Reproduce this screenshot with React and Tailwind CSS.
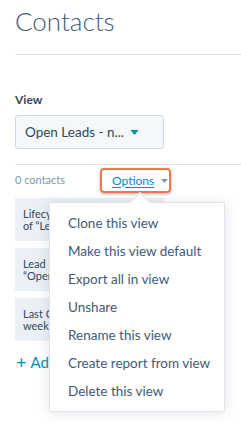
import { useState } from "react";

const MENU_ITEMS = [
  "Clone this view",
  "Make this view default",
  "Export all in view",
  "Unshare",
  "Rename this view",
  "Create report from view",
  "Delete this view",
];

const FILTERS = [
  ["Lifecycle stage is any", "of \u201cLead\u201d"],
  ["Lead status is any of", "\u201cOpen\u201d"],
  ["Last Contacted is more than 1", "week ago"],
];

const Caret = ({ className }) => (
  <svg viewBox="0 0 10 6" className={className} aria-hidden="true">
    <path d="M0 0 L10 0 L5 6 Z" fill="currentColor" />
  </svg>
);

const App = () => {
  const [menuOpen] = useState(true);

  return (
    <div className="relative w-[241px] h-[425px] overflow-hidden bg-white font-['Lato',sans-serif] text-[#33475b]">
      <div className="pl-[15px]">
        <h1 className="pt-[5px] text-[26px] leading-[33px] font-light text-[#425b76]">
          Contacts
        </h1>
        <div className="mt-[16px] h-px bg-[#dfe3eb]" />

        <div className="mt-[38px] text-[12px] leading-[14px] font-bold">View</div>
        <button
          type="button"
          className="mt-[8px] flex items-center w-[149px] h-[34px] px-[9px] rounded-[3px] border border-[#cbd6e2] bg-[#f5f8fa] text-[13.5px]"
        >
          <span>Open Leads - n...</span>
          <Caret className="ml-[6px] w-[9px] h-[5px] text-[#0091ae]" />
        </button>

        <div className="mt-[15px] h-px bg-[#dfe3eb]" />

        <div className="mt-[2px] flex items-center h-[27px]">
          <span className="w-[85px] text-[11px] text-[#7c98b6]">0 contacts</span>
          <div className="flex items-center h-[25px] w-[71px] pl-[10px] rounded-[4px] border-2 border-[#f2754e] shadow-[0_1px_3px_rgba(0,0,0,0.3)]">
            <span className="text-[12px] text-[#0091ae] underline underline-offset-2">
              Options
            </span>
            <Caret className="ml-[7px] w-[7px] h-[4px] text-[#7c98b6]" />
          </div>
        </div>

        <div className="mt-[4px] flex flex-col gap-[7px]">
          {FILTERS.map(([a, b]) => (
            <div
              key={a}
              className="w-[149px] h-[43px] pt-[10px] pl-[8px] bg-[#eaf0f6] text-[11px] leading-[12px] whitespace-nowrap overflow-hidden"
            >
              {a}
              <br />
              {b}
            </div>
          ))}
        </div>

        <div className="mt-[10px] flex items-center text-[15px] text-[#0091ae]">
          <span className="text-[18px] leading-[18px] mr-[4px] ml-[1px]">+</span>
          <span>Add filter</span>
        </div>
      </div>

      {menuOpen && (
        <div className="absolute left-[49px] top-[202px] w-[176px] py-[6px] bg-white border border-[#dfe3eb] rounded-[2px] shadow-[0_1px_12px_rgba(45,62,80,0.15)]">
          <div className="absolute -top-[8px] left-[83px] w-[14px] h-[14px] rotate-45 bg-white border-l border-t border-[#dfe3eb]" />
          {MENU_ITEMS.map((item) => (
            <div
              key={item}
              className="relative h-[28px] leading-[28px] pl-[18px] text-[13.5px] text-[#425b76] whitespace-nowrap"
            >
              {item}
            </div>
          ))}
        </div>
      )}
    </div>
  );
};

export default App;
